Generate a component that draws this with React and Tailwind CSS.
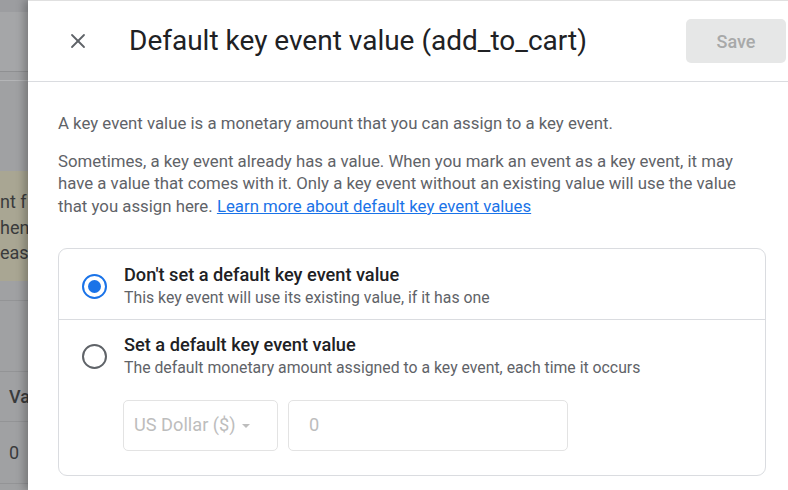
import { X } from "lucide-react";

function Radio({ checked }) {
    return checked ? (
        <div className="w-[25px] h-[25px] shrink-0 rounded-full border-[2.5px] border-[#1a73e8] flex items-center justify-center">
            <div className="w-[13px] h-[13px] rounded-full bg-[#1a73e8]"></div>
        </div>
    ) : (
        <div className="w-[25px] h-[25px] shrink-0 rounded-full border-[2.5px] border-[#5f6368]"></div>
    );
}

export default function App() {
    return (
        <div className="w-[788px] h-[490px] overflow-hidden flex bg-white" style={{ fontFamily: "Roboto, 'Noto Sans', sans-serif" }}>
            {/* ── page behind the scrim ── */}
            <div className="w-[28px] shrink-0 flex flex-col bg-[#a0a1a3] text-[#3a3b3c] text-[18px] overflow-hidden whitespace-nowrap">
                <div className="h-[12px] bg-[#9c9da0]"></div>
                <div className="h-[60px] bg-[#a5a6a8] border-b border-[#8f9092]"></div>
                <div className="h-[9px] border-b border-[#b4b5b7]"></div>
                <div className="h-[90px]"></div>
                <div className="h-[110px] bg-[#a9a693] pt-[18px] leading-[25.5px]">
                    <div>nt f</div>
                    <div>hen</div>
                    <div>easu</div>
                </div>
                <div className="h-[20px] border-b border-[#939496]"></div>
                <div className="h-[71px] border-b border-[#939496]"></div>
                <div className="h-[50px] border-b border-[#939496] flex items-center pl-[9px] font-medium">Val</div>
                <div className="h-[62px] border-b border-[#939496] flex items-center pl-[9px]">0</div>
            </div>

            {/* ── side panel ── */}
            <div className="flex-1 flex flex-col border-t border-[#e0e0e0] shadow-[-4px_0_8px_rgba(0,0,0,0.25)] relative z-10 bg-white">
                <div className="h-[81px] shrink-0 flex items-center border-b border-[#dadce0]">
                    <X size={24} strokeWidth={1.8} className="ml-[38px] text-[#5f6368]" />
                    <h1 className="ml-[39px] text-[28px] text-[#202124]">Default key event value (add_to_cart)</h1>
                    <button className="ml-auto mr-[2px] w-[100px] h-[44px] rounded-[5px] bg-[#e6e7e7] text-[18px] font-medium text-[#a8a9a9]">Save</button>
                </div>

                <div className="pt-[30px] pl-[30px] pr-[22px] text-[16.8px] leading-[22.5px] text-[#5f6368]">
                    <p>A key event value is a monetary amount that you can assign to a key event.</p>
                    <p className="mt-[15px] w-[683px]">
                        Sometimes, a key event already has a value. When you mark an event as a key event, it may have a value that comes with it. Only a key event without an existing value will use the value that you assign here.{" "}
                        <a className="text-[#1a73e8] underline">Learn more about default key event values</a>
                    </p>

                    <div className="mt-[31px] border border-[#dadce0] rounded-[9px]">
                        <div className="flex items-center pl-[23px] pt-[15px] pb-[10px] border-b border-[#dadce0]">
                            <Radio checked />
                            <div className="ml-[17px]">
                                <div className="text-[18.2px] leading-[22px] font-medium text-[#202124]">Don't set a default key event value</div>
                                <div className="text-[15.8px] leading-[23px] text-[#5f6368]">This key event will use its existing value, if it has one</div>
                            </div>
                        </div>
                        <div className="pl-[23px] pt-[14px] pb-[24px]">
                            <div className="flex items-center">
                                <Radio />
                                <div className="ml-[17px]">
                                    <div className="text-[18.2px] leading-[22px] font-medium text-[#202124]">Set a default key event value</div>
                                    <div className="text-[15.8px] leading-[23px] text-[#5f6368]">The default monetary amount assigned to a key event, each time it occurs</div>
                                </div>
                            </div>
                            <div className="mt-[21px] ml-[41px] flex gap-[10px]">
                                <div className="w-[155px] h-[51px] border border-[#e3e3e3] rounded-[5px] flex items-center pl-[10px] text-[18.2px] text-[#bdbdbd]">
                                    US Dollar ($)
                                    <span className="ml-[6px] w-0 h-0 border-l-[4px] border-r-[4px] border-t-[4px] border-l-transparent border-r-transparent border-t-[#bdbdbd]"></span>
                                </div>
                                <div className="w-[280px] h-[51px] border border-[#e3e3e3] rounded-[5px] flex items-center pl-[20px] text-[18.2px] text-[#bdbdbd]">0</div>
                            </div>
                        </div>
                    </div>
                </div>
            </div>
        </div>
    );
}
